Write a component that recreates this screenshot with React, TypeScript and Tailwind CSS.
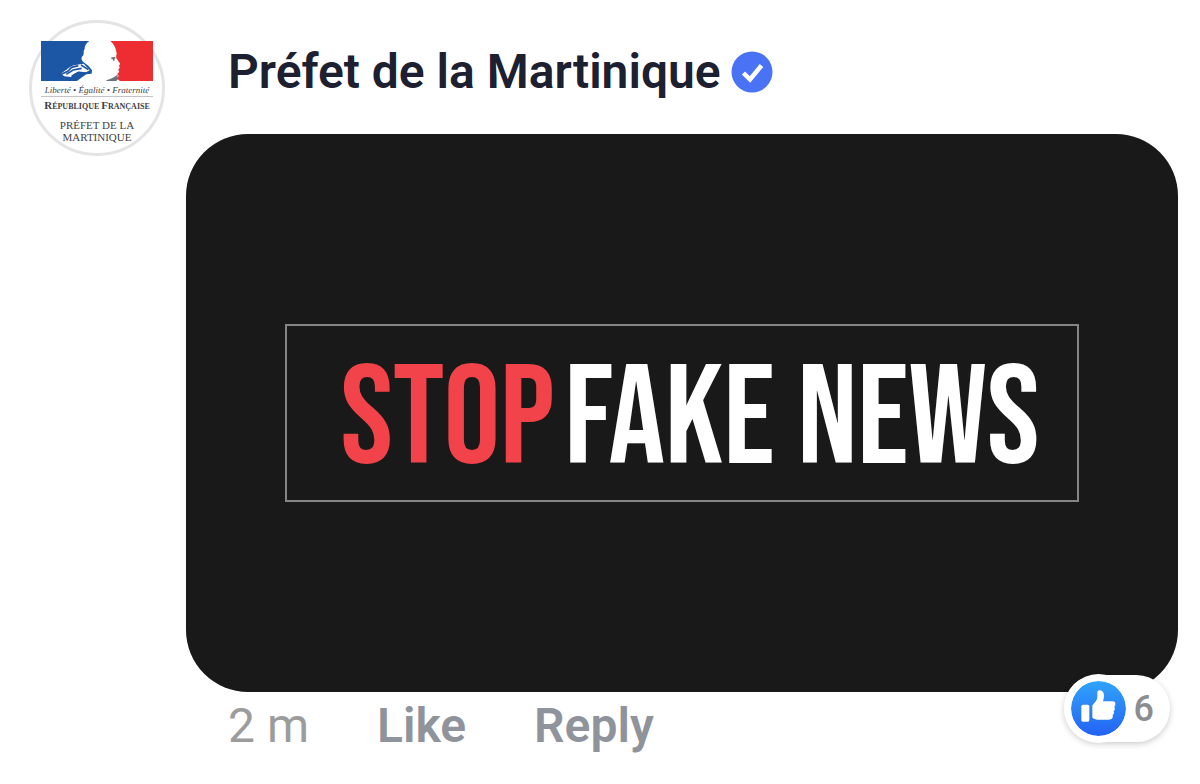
function MarianneEmblem() {
  return (
    <svg viewBox="0 0 336 120" className="h-10 w-28" aria-hidden="true">
      <path
        fill="#1c57a5"
        d="M0 0H145C137 6 130 14 131 24C126 30 130 38 126 44C118 50 122 58 128 64L142 74L153 88L152 98L136 100L124 108L108 120H0Z"
      />
      <path
        fill="#ee2d33"
        d="M208 0H336V120H237L228 113L233 105L229 98L235 93L232 86L236 80L234 73L238 69L227 53C223 45 229 40 226 33C224 20 218 8 208 0Z"
      />
      <path fill="#fff" d="M60 98C76 88 84 78 98 73L128 68L146 88L132 95L114 92L98 100L90 108L70 106Z" />
      <path
        fill="none"
        stroke="#1c57a5"
        strokeWidth="5"
        d="M58 101L80 91L92 79L112 74M76 100L96 87L122 82M92 106L112 94L136 96M120 72L142 86"
      />
      <path fill="#6b7280" d="M196 118C212 114 224 106 232 99L229 107L233 112L226 120H196Z" />
      <path fill="none" stroke="#6b7280" strokeWidth="5" d="M211 52L223 50M218 50V59" />
    </svg>
  )
}

function Avatar() {
  return (
    <a
      href="#profile"
      aria-label="Préfet de la Martinique"
      className="flex size-[136px] shrink-0 flex-col items-center rounded-full border-3 border-[#e4e4e6] bg-white pt-[18px] whitespace-nowrap text-[#3f3f46]"
    >
      <MarianneEmblem />
      <span className="mt-1 font-['Liberation_Serif',serif] text-[9px] leading-[10px] italic">
        Liberté • Égalité • Fraternité
      </span>
      <span className="mt-px h-px w-28 shrink-0 bg-[#c4c4c8]" />
      <span className="mt-[2px] font-['Liberation_Serif',serif] text-[8px] leading-3 font-bold">
        <span className="text-[11px]">R</span>ÉPUBLIQUE <span className="text-[11px]">F</span>RANÇAISE
      </span>
      <span className="mt-[6px] text-center font-['Liberation_Serif',serif] text-[11px] leading-3">
        PRÉFET DE LA
        <br />
        MARTINIQUE
      </span>
    </a>
  )
}

function VerifiedBadge() {
  return (
    <svg viewBox="0 0 42 42" className="size-[42px] shrink-0" role="img" aria-label="Verified">
      <circle cx="21" cy="21" r="20.5" fill="#4a72f5" />
      <path d="M12.5 22L19 28.5L30.5 14.5" fill="none" stroke="#fff" strokeWidth="4.5" />
    </svg>
  )
}

function LikeIcon() {
  return (
    <svg viewBox="0 0 165 165" className="relative size-[55px] rounded-full ring-7 ring-white" aria-hidden="true">
      <defs>
        <linearGradient id="like-fill" x1="0" y1="0" x2="0" y2="1">
          <stop offset="0" stopColor="#30a4fa" />
          <stop offset="1" stopColor="#2462f4" />
        </linearGradient>
      </defs>
      <circle cx="82.5" cy="82.5" r="82.5" fill="url(#like-fill)" />
      <rect x="31" y="71" width="24" height="51" rx="5" fill="#fff" />
      <path
        fill="#fff"
        d="M64 78C64 73 66 70 70 66C76 60 79 54 79 46V35C79 29 83 27 88 28C96 30 99 37 99 44C99 51 97 56 96 61H125C131 61 134 65 133 70C133 73 132 75 130 77C133 82 132 87 128 90C130 95 129 99 125 102C127 111 122 116 114 116H84C76 116 70 114 64 110Z"
      />
    </svg>
  )
}

export default function App() {
  return (
    <main className="flex min-h-screen items-start gap-[21px] bg-white pt-5 pr-[22px] pl-[29px] font-[Roboto,sans-serif]">
      <Avatar />
      <article className="min-w-0 flex-1">
        <header className="flex h-[114px] items-center gap-[10px] pb-[10px] pl-[42px]">
          <h1 className="text-[48px] leading-[56px] font-semibold text-[#1c2030]">Préfet de la Martinique</h1>
          <VerifiedBadge />
        </header>
        <div className="relative">
          <div className="flex aspect-video items-center justify-center rounded-[62px] bg-[#191919]">
            <p className="flex h-[178px] w-4/5 items-center justify-center gap-[10px] border-2 border-[#858585] pt-[14px] pl-4 font-['Bebas_Neue','Roboto_Condensed','Liberation_Sans_Narrow',sans-serif] text-[141px] leading-none whitespace-nowrap text-white">
              <span className="text-[#f2434a]">STOP</span>
              <span>FAKE NEWS</span>
            </p>
          </div>
          <button
            type="button"
            aria-label="6 likes"
            className="absolute right-2 -bottom-[50px] flex h-[67px] items-center gap-2 rounded-full bg-white pr-4 pl-[7px] text-[36px] leading-none font-medium text-[#8b8d91] shadow-[0_2px_6px_rgba(0,0,0,0.2)]"
          >
            <LikeIcon />
            <span>6</span>
          </button>
        </div>
        <footer className="flex gap-[68px] pt-[6px] pl-[42px] text-[48px] leading-[56px] text-[#8f949c]">
          <time className="text-[#9c9c9c]">2 m</time>
          <button type="button" className="font-semibold">
            Like
          </button>
          <button type="button" className="font-semibold">
            Reply
          </button>
        </footer>
      </article>
    </main>
  )
}
